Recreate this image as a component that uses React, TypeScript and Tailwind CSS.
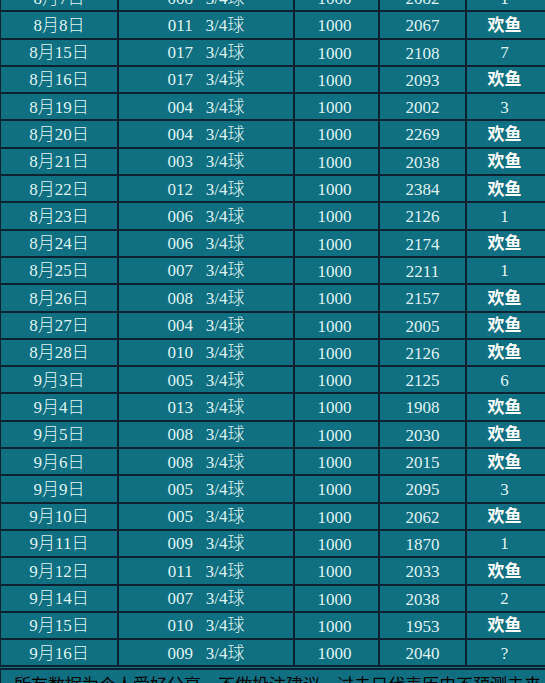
import React from "react";

type Row = { date: string; pick: string; stake: string; score: string; result: string };

const rows: Row[] = [
  { date: "8月7日", pick: "008 3/4球", stake: "1000", score: "2082", result: "1" },
  { date: "8月8日", pick: "011 3/4球", stake: "1000", score: "2067", result: "欢鱼" },
  { date: "8月15日", pick: "017 3/4球", stake: "1000", score: "2108", result: "7" },
  { date: "8月16日", pick: "017 3/4球", stake: "1000", score: "2093", result: "欢鱼" },
  { date: "8月19日", pick: "004 3/4球", stake: "1000", score: "2002", result: "3" },
  { date: "8月20日", pick: "004 3/4球", stake: "1000", score: "2269", result: "欢鱼" },
  { date: "8月21日", pick: "003 3/4球", stake: "1000", score: "2038", result: "欢鱼" },
  { date: "8月22日", pick: "012 3/4球", stake: "1000", score: "2384", result: "欢鱼" },
  { date: "8月23日", pick: "006 3/4球", stake: "1000", score: "2126", result: "1" },
  { date: "8月24日", pick: "006 3/4球", stake: "1000", score: "2174", result: "欢鱼" },
  { date: "8月25日", pick: "007 3/4球", stake: "1000", score: "2211", result: "1" },
  { date: "8月26日", pick: "008 3/4球", stake: "1000", score: "2157", result: "欢鱼" },
  { date: "8月27日", pick: "004 3/4球", stake: "1000", score: "2005", result: "欢鱼" },
  { date: "8月28日", pick: "010 3/4球", stake: "1000", score: "2126", result: "欢鱼" },
  { date: "9月3日", pick: "005 3/4球", stake: "1000", score: "2125", result: "6" },
  { date: "9月4日", pick: "013 3/4球", stake: "1000", score: "1908", result: "欢鱼" },
  { date: "9月5日", pick: "008 3/4球", stake: "1000", score: "2030", result: "欢鱼" },
  { date: "9月6日", pick: "008 3/4球", stake: "1000", score: "2015", result: "欢鱼" },
  { date: "9月9日", pick: "005 3/4球", stake: "1000", score: "2095", result: "3" },
  { date: "9月10日", pick: "005 3/4球", stake: "1000", score: "2062", result: "欢鱼" },
  { date: "9月11日", pick: "009 3/4球", stake: "1000", score: "1870", result: "1" },
  { date: "9月12日", pick: "011 3/4球", stake: "1000", score: "2033", result: "欢鱼" },
  { date: "9月14日", pick: "007 3/4球", stake: "1000", score: "2038", result: "2" },
  { date: "9月15日", pick: "010 3/4球", stake: "1000", score: "1953", result: "欢鱼" },
  { date: "9月16日", pick: "009 3/4球", stake: "1000", score: "2040", result: "?" },
];

const font = { fontFamily: '"Liberation Serif", "Noto Sans CJK SC", serif' };

export default function App() {
  return (
    <div className="w-[545px] h-[683px] overflow-hidden bg-[#106f80]" style={font}>
      <div className="-mt-[15px] -ml-[1px] w-[549px]">
        {rows.map((r, i) => (
          <div
            key={i}
            className="grid grid-cols-[118px_176px_85px_87px_1fr] h-[27.3px] border-b-2 border-[#0b2231] text-[17px] text-[#dff3f3]"
          >
            <div className="flex items-center justify-center border-l-2 border-[#0b2231] font-light">{r.date}</div>
            <div className="flex items-center justify-center border-l-2 border-[#0b2231] font-light">
              {r.pick.replace(" ", "\u00a0\u00a0\u00a0")}
            </div>
            <div className="flex items-center justify-center border-l-2 border-[#0b2231] pt-[1px] pr-[4px]">{r.stake}</div>
            <div className="flex items-center justify-center border-l-2 border-[#0b2231] pt-[1px]">{r.score}</div>
            <div
              className={
                r.result === "欢鱼"
                  ? "flex items-center justify-center border-l-2 border-r-2 border-[#0b2231] pr-[4px] font-semibold text-white"
                  : "flex items-center justify-center border-l-2 border-r-2 border-[#0b2231] pr-[4px]"
              }
            >
              {r.result}
            </div>
          </div>
        ))}
        <div className="h-[3px] border-b-2 border-[#0b2231]" />
        <div className="border-l-2 border-[#0b2231] pl-[13px] pt-[5px] text-[17px] leading-[22px] whitespace-nowrap text-black">
          所有数据为个人爱好分享，不做投注建议，过去只代表历史不预测未来
        </div>
      </div>
    </div>
  );
}
